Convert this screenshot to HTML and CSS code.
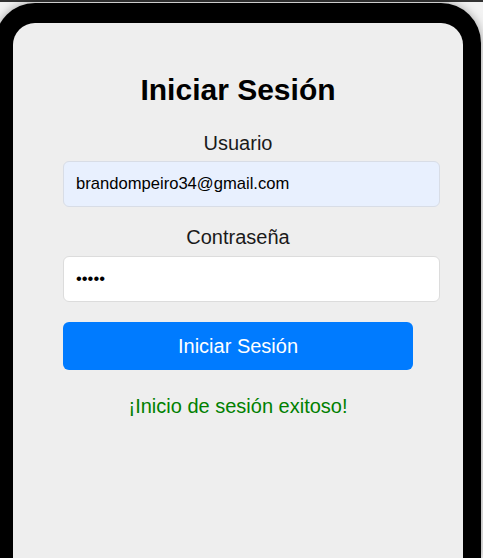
FILE: index.html
```html
<!DOCTYPE html>
<html lang="es">
<head>
<meta charset="utf-8">
<title>Iniciar Sesión</title>
<link rel="stylesheet" href="styles.css">
</head>
<body>
<div class="topline"></div>
<div class="stage">
  <div class="phone">
    <div class="screen">
      <form class="login">
        <h2 class="title">Iniciar Sesión</h2>
        <label class="label" for="user">Usuario</label>
        <input class="field field-autofill" id="user" type="text" value="brandompeiro34@gmail.com">
        <label class="label label-gap" for="pass">Contraseña</label>
        <input class="field" id="pass" type="password" value="12345">
        <button class="btn" type="button">Iniciar Sesión</button>
        <p class="msg">¡Inicio de sesión exitoso!</p>
      </form>
    </div>
  </div>
</div>
</body>
</html>
```
FILE: styles.css
```css
html, body {
  margin: 0;
  padding: 0;
}
body {
  background: #f3f3f3;
  font-family: "Liberation Sans", Arial, sans-serif;
  overflow: hidden;
  height: 558px;
}
.topline {
  height: 2px;
  background: #333;
}
.stage {
  padding-top: 1px;
}
.phone {
  width: 450px;
  margin-left: -5px;
  border: 18px solid #000;
  border-top-width: 20px;
  border-bottom-width: 0;
  border-radius: 40px 40px 0 0;
  background: #000;
  box-shadow: 0 0 10px rgba(0, 0, 0, 0.35);
}
.screen {
  background: #eeeeee;
  border-radius: 22px 22px 0 0;
  height: 535px;
  padding: 49px 50px 0;
  box-sizing: border-box;
}
.login {
  width: 350px;
  display: flex;
  flex-direction: column;
  align-items: flex-start;
}
.title {
  width: 350px;
  margin: 0 0 23px;
  font-size: 30px;
  line-height: 36px;
  font-weight: bold;
  text-align: center;
  color: #000;
}
.label {
  width: 350px;
  text-align: center;
  font-size: 20px;
  line-height: 24px;
  color: #1a1a1a;
  margin-bottom: 6px;
}
.label-gap {
  margin-top: 18px;
  margin-bottom: 7px;
}
.field {
  width: 351px;
  margin: 0;
  padding: 12px;
  border: 1px solid #dcdcdc;
  border-radius: 6px;
  background: #fff;
  font-family: "Liberation Sans", Arial, sans-serif;
  font-size: 16.6px;
  line-height: 20px;
  color: #000;
  outline: none;
}
.field-autofill {
  background: #e8f0fe;
  border-color: #d8dde6;
}
.btn {
  width: 350px;
  margin-top: 20px;
  padding: 12px 0;
  border: none;
  border-radius: 6px;
  background: #007bff;
  color: #fff;
  font-family: "Liberation Sans", Arial, sans-serif;
  font-size: 20px;
  line-height: 24px;
  cursor: pointer;
}
.msg {
  width: 350px;
  margin: 24px 0 0;
  text-align: center;
  font-size: 20px;
  line-height: 24px;
  color: #008000;
}
```
